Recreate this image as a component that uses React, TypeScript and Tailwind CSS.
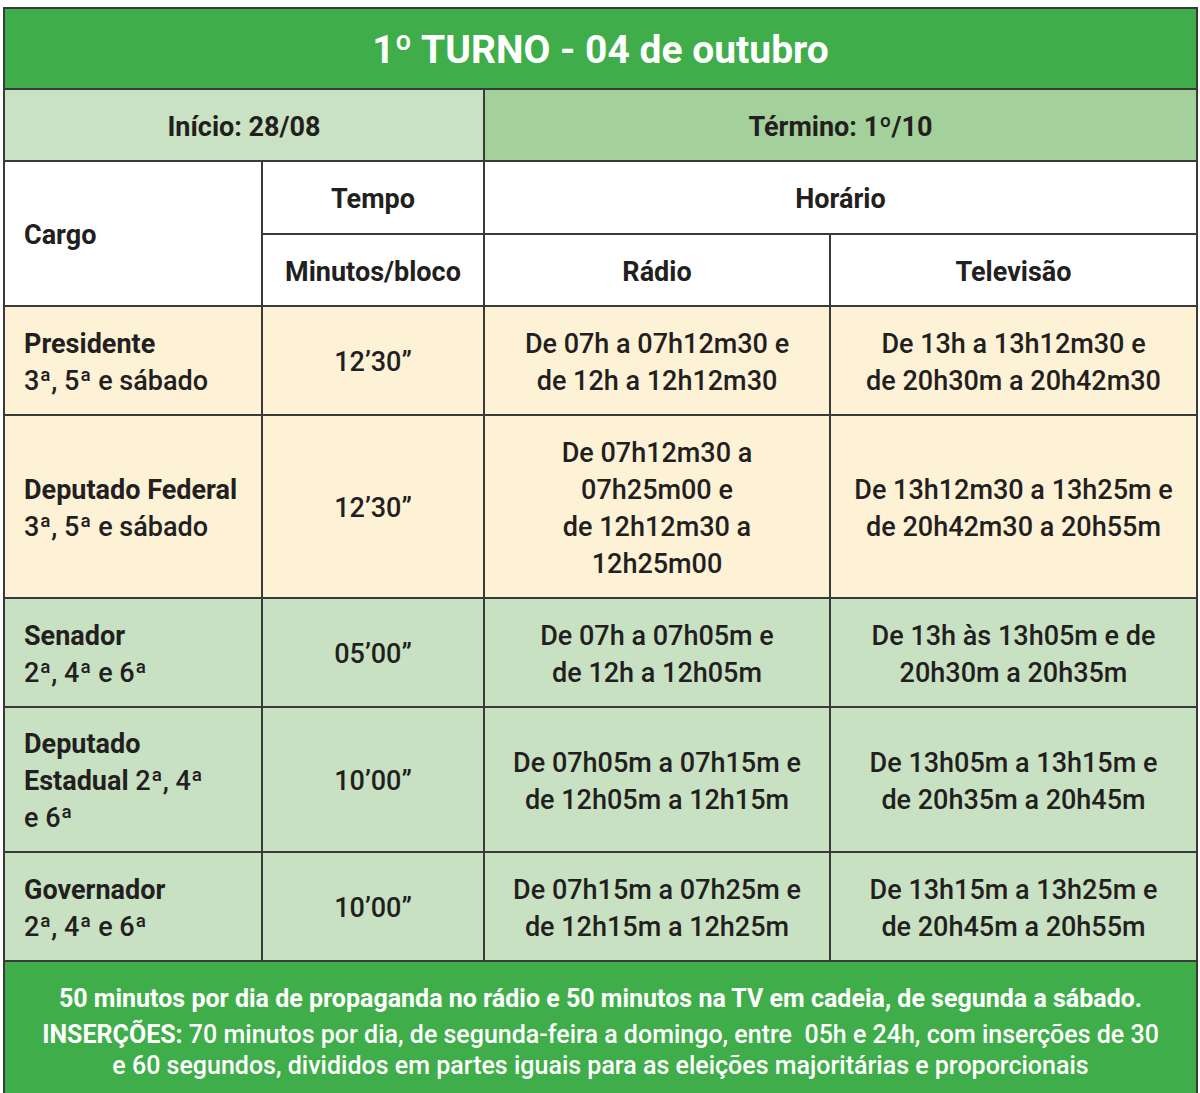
const rows = [
  {
    cargo: ['Presidente', '3ª, 5ª e sábado'],
    tempo: '12’30”',
    radio: ['De 07h a 07h12m30 e', 'de 12h a 12h12m30'],
    tv: ['De 13h a 13h12m30 e', 'de 20h30m a 20h42m30'],
    bg: 'bg-[#fdf1d6]',
    h: 'h-[107px]',
  },
  {
    cargo: ['Deputado Federal', '3ª, 5ª e sábado'],
    tempo: '12’30”',
    radio: ['De 07h12m30 a', '07h25m00 e', 'de 12h12m30 a', '12h25m00'],
    tv: ['De 13h12m30 a 13h25m e', 'de 20h42m30 a 20h55m'],
    bg: 'bg-[#fdf1d6]',
    h: 'h-[181px]',
  },
  {
    cargo: ['Senador', '2ª, 4ª e 6ª'],
    tempo: '05’00”',
    radio: ['De 07h a 07h05m e', 'de 12h a 12h05m'],
    tv: ['De 13h às 13h05m e de', '20h30m a 20h35m'],
    bg: 'bg-[#c8e1c2]',
    h: 'h-[107px]',
  },
  {
    cargo: ['Deputado', 'Estadual 2ª, 4ª', 'e 6ª'],
    tempo: '10’00”',
    radio: ['De 07h05m a 07h15m e', 'de 12h05m a 12h15m'],
    tv: ['De 13h05m a 13h15m e', 'de 20h35m a 20h45m'],
    bg: 'bg-[#c8e1c2]',
    h: 'h-[143px]',
  },
  {
    cargo: ['Governador', '2ª, 4ª e 6ª'],
    tempo: '10’00”',
    radio: ['De 07h15m a 07h25m e', 'de 12h15m a 12h25m'],
    tv: ['De 13h15m a 13h25m e', 'de 20h45m a 20h55m'],
    bg: 'bg-[#c8e1c2]',
    h: 'h-[107px]',
  },
];

function Lines({ items }: { items: string[] }) {
  return (
    <div>
      {items.map((t, i) => (
        <div key={i}>{t}</div>
      ))}
    </div>
  );
}

export default function App() {
  return (
    <div className="bg-white w-[1200px] h-[1093px] overflow-hidden pt-[7px] pl-[3px] font-['Roboto',sans-serif] text-[#231f20]">
      <div className="grid grid-cols-[256px_220px_344px_365px] gap-[2px] p-[2px] w-[1195px] bg-[#3a3a3a]">
        <div className="col-span-4 h-[79px] pt-[4px] bg-[#3fae4a] flex items-center justify-center text-white text-[39px] font-bold">
          1º TURNO - 04 de outubro
        </div>

        <div className="col-span-2 h-[70px] pt-[5px] bg-[#c8e2c3] flex items-center justify-center text-[27px] font-bold">
          Início: 28/08
        </div>
        <div className="col-span-2 h-[70px] pt-[5px] bg-[#a4d09b] flex items-center justify-center text-[27px] font-bold">
          Término: 1º/10
        </div>

        <div className="row-span-2 pt-[4px] bg-white flex items-center pl-[19px] text-[27px] font-bold">Cargo</div>
        <div className="h-[71px] pt-[4px] bg-white flex items-center justify-center text-[27px] font-bold">Tempo</div>
        <div className="col-span-2 h-[71px] pt-[4px] bg-white flex items-center justify-center text-[27px] font-bold">Horário</div>
        <div className="h-[70px] pt-[4px] bg-white flex items-center justify-center text-[27px] font-bold">Minutos/bloco</div>
        <div className="h-[70px] pt-[4px] bg-white flex items-center justify-center text-[27px] font-bold">Rádio</div>
        <div className="h-[70px] pt-[4px] bg-white flex items-center justify-center text-[27px] font-bold">Televisão</div>

        {rows.map((r, i) => (
          <div key={i} className="contents">
            <div className={`${r.bg} ${r.h} pt-[4px] flex items-center pl-[19px] text-[27px] leading-[37px] font-medium`}>
              <div>
                {r.cargo.map((t, j) => (
                  <div key={j} className={j === 0 || (r.cargo.length === 3 && j === 1) ? 'font-bold' : ''}>
                    {r.cargo.length === 3 && j === 1 ? (
                      <>
                        Estadual <span className="font-medium">2ª, 4ª</span>
                      </>
                    ) : (
                      t
                    )}
                  </div>
                ))}
              </div>
            </div>
            <div className={`${r.bg} ${r.h} pt-[4px] flex items-center justify-center text-[27px] font-medium`}>{r.tempo}</div>
            <div className={`${r.bg} ${r.h} pt-[4px] flex items-center justify-center text-center text-[27px] leading-[37px] font-medium`}>
              <Lines items={r.radio} />
            </div>
            <div className={`${r.bg} ${r.h} pt-[4px] flex items-center justify-center text-center text-[27px] leading-[37px] font-medium`}>
              <Lines items={r.tv} />
            </div>
          </div>
        ))}

        <div className="col-span-4 h-[140px] bg-[#3fae4a] text-white text-center text-[25px] pt-[20px] whitespace-nowrap">
          <p className="font-bold leading-[33px]">
            50 minutos por dia de propaganda no rádio e 50 minutos na TV em cadeia, de segunda a sábado.
          </p>
          <p className="font-medium leading-[31px] mt-[4px]">
            <span className="font-bold">INSERÇÕES:</span> 70 minutos por dia, de segunda-feira a domingo, entre&nbsp; 05h e 24h, com inserções de 30
            <br />
            e 60 segundos, divididos em partes iguais para as eleições majoritárias e proporcionais
          </p>
        </div>
      </div>
    </div>
  );
}
